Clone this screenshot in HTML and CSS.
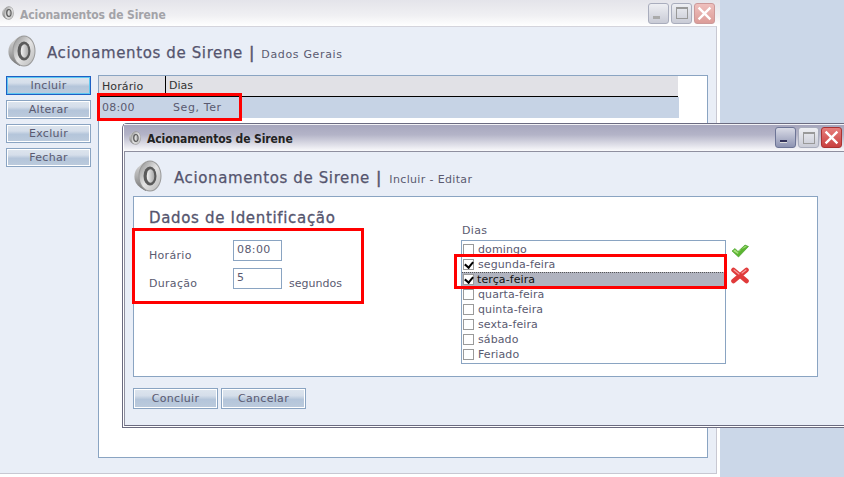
FILE: index.html
```html
<!DOCTYPE html>
<html>

<head>
    <title>Acionamentos de Sirene</title>
    <meta charset="UTF-8" />
    <link rel="stylesheet" href="styles.css">
</head>

<body>
    <svg class="defs" width="0" height="0">
        <defs>
            <linearGradient id="cone" x1="0" x2="0" y1="0" y2="1">
                <stop offset="0" stop-color="#d8d8d8" />
                <stop offset="0.5" stop-color="#b0b0b0" />
                <stop offset="1" stop-color="#707070" />
            </linearGradient>
            <linearGradient id="rim" x1="0" x2="1" y1="0" y2="1">
                <stop offset="0" stop-color="#8f8f8f" />
                <stop offset="0.5" stop-color="#e4e4e4" />
                <stop offset="1" stop-color="#b8b8b8" />
            </linearGradient>
            <linearGradient id="hub" x1="0" x2="1" y1="0" y2="0">
                <stop offset="0" stop-color="#f4f4f4" />
                <stop offset="1" stop-color="#a8a8a8" />
            </linearGradient>
            <symbol id="speaker" viewBox="0 0 28 32">
                <path d="M12 1 C6 5 3 8 1.5 11 C0 14 0 19 1.5 22 C3 25 6 28 12 31 Z" fill="url(#cone)" />
                <ellipse cx="16" cy="16" rx="11.5" ry="15.5" fill="#999" />
                <ellipse cx="16" cy="16" rx="10.5" ry="14.5" fill="url(#rim)" />
                <ellipse cx="16" cy="16" rx="6.5" ry="9.5" fill="#5a5a5a" />
                <ellipse cx="16.5" cy="16" rx="3.8" ry="6.8" fill="url(#hub)" />
            </symbol>
        </defs>
    </svg>

    <div class="window back">
        <div class="titlebar">
            <svg class="title-icon"><use href="#speaker" /></svg>
            <span class="title-text">Acionamentos de Sirene</span>
            <div class="win-buttons">
                <span class="win-btn"><i class="min"></i></span>
                <span class="win-btn"><i class="max"></i></span>
                <span class="win-btn close">
                    <svg width="15" height="15" viewBox="0 0 14 14"><path d="M1.5 1.5 L12.5 12.5 M12.5 1.5 L1.5 12.5" stroke="#fff" stroke-width="2.2" /></svg>
                </span>
            </div>
        </div>
        <div class="client">
            <div class="page-head">
                <svg class="head-icon"><use href="#speaker" /></svg>
                <span class="head-title">Acionamentos de Sirene</span>
                <span class="head-sep">|</span>
                <span class="head-sub">Dados Gerais</span>
            </div>
            <div class="main">
                <div class="side">
                    <button class="btn focus">Incluir</button>
                    <button class="btn">Alterar</button>
                    <button class="btn">Excluir</button>
                    <button class="btn">Fechar</button>
                </div>
                <div class="grid">
                    <div class="grid-head">
                        <span class="col-time">Horário</span>
                        <span class="col-days">Dias</span>
                    </div>
                    <div class="grid-row">
                        <span class="cell-time">08:00</span>
                        <span class="cell-days">Seg, Ter</span>
                    </div>
                </div>
            </div>
        </div>
    </div>

    <div class="window front">
        <div class="titlebar">
            <svg class="title-icon"><use href="#speaker" /></svg>
            <span class="title-text">Acionamentos de Sirene</span>
            <div class="win-buttons">
                <span class="win-btn hot"><i class="min"></i></span>
                <span class="win-btn"><i class="max"></i></span>
                <span class="win-btn close">
                    <svg width="15" height="15" viewBox="0 0 14 14"><path d="M1.5 1.5 L12.5 12.5 M12.5 1.5 L1.5 12.5" stroke="#fff" stroke-width="2.2" /></svg>
                </span>
            </div>
        </div>
        <div class="client">
            <div class="page-head">
                <svg class="head-icon"><use href="#speaker" /></svg>
                <span class="head-title">Acionamentos de Sirene</span>
                <span class="head-sep">|</span>
                <span class="head-sub">Incluir - Editar</span>
            </div>
            <div class="panel">
                <div class="panel-left">
                    <h2>Dados de Identificação</h2>
                    <div class="field">
                        <label>Horário</label>
                        <input type="text" value="08:00" />
                    </div>
                    <div class="field">
                        <label>Duração</label>
                        <input type="text" value="5" />
                        <span class="unit">segundos</span>
                    </div>
                </div>
                <div class="panel-right">
                    <div class="list-label">Dias</div>
                    <div class="list-wrap">
                        <div class="list">
                            <div class="item"><span class="box"></span>domingo</div>
                            <div class="item"><span class="box on"></span>segunda-feira</div>
                            <div class="item selected"><span class="box on"></span><span class="item-text">terça-feira</span></div>
                            <div class="item"><span class="box"></span>quarta-feira</div>
                            <div class="item"><span class="box"></span>quinta-feira</div>
                            <div class="item"><span class="box"></span>sexta-feira</div>
                            <div class="item"><span class="box"></span>sábado</div>
                            <div class="item"><span class="box"></span>Feriado</div>
                        </div>
                        <div class="list-actions">
                            <svg width="18" height="14" viewBox="0 0 18 14">
                                <path d="M1 7 L4 4.5 L7 7.5 L14 1 L17.5 2.5 L7.5 13 Z" fill="#5cb531" stroke="#3d9a22" stroke-width="0.6" />
                                <path d="M2 7 L4 5.5 L7 8.5 L14 2 L16 2.6 L8 6.5 L7 10 Z" fill="#a6e07d" />
                            </svg>
                            <svg width="18" height="17" viewBox="0 0 18 17">
                                <path d="M2.5 3 L15.5 14 M15.5 3 L2.5 14" stroke="#e03a3a" stroke-width="4.6" stroke-linecap="round" />
                                <path d="M3 3 L8 7 M15 3 L11 6" stroke="#f79a9a" stroke-width="1.2" stroke-linecap="round" />
                            </svg>
                        </div>
                    </div>
                </div>
            </div>
            <div class="actions">
                <button class="btn wide">Concluir</button>
                <button class="btn wide">Cancelar</button>
            </div>
        </div>
    </div>

    <div class="mark mark-row"></div>
    <div class="mark mark-fields"></div>
    <div class="mark mark-days"></div>
</body>

</html>
```

FILE: styles.css
```css
body {
    margin: 0;
    width: 844px;
    height: 477px;
    overflow: hidden;
    position: relative;
    background-color: #cbd7e8;
    font-family: "DejaVu Sans", Verdana, sans-serif;
    font-size: 11px;
    color: #5a5a70;
}

.defs {
    position: absolute;
}

.window {
    position: absolute;
    box-sizing: border-box;
    display: flex;
    flex-direction: column;
    background-color: #fff;
}

.back {
    left: 0;
    top: 0;
    width: 720px;
    height: 477px;
    padding: 0 3px 3px 0;
    border-top-right-radius: 5px;
}

.front {
    left: 122px;
    top: 123px;
    width: 722px;
    height: 305px;
    border: 1px solid #6b6b80;
    border-right: none;
    border-radius: 5px 0 0 0;
}

.titlebar {
    flex: none;
    display: flex;
    align-items: center;
    height: 26px;
    margin-right: -3px;
    background: linear-gradient(#e4e4ea, #f0f0f3 60%, #fff);
    color: #a3a3a8;
    font-family: "DejaVu Sans Condensed", "DejaVu Sans", sans-serif;
    font-weight: bold;
    font-size: 12px;
    letter-spacing: -0.1px;
}

.front .titlebar {
    height: 28px;
    margin: 0 0 0 1px;
    background: linear-gradient(#a5a5bc, #b4b4c8 40%, #fafafc);
    box-shadow: inset 0 1px 0 #f2f2f6;
    color: #222;
    border-bottom: 1px solid #8f8f9f;
    box-sizing: border-box;
}

.title-icon {
    width: 12px;
    height: 14px;
    margin: 0 6px 0 2px;
    flex: none;
}

.front .title-icon {
    margin: 0 6px 0 5px;
}

.title-text {
    margin-top: 3px;
}

.win-buttons {
    margin-left: auto;
    display: flex;
    gap: 2px;
    margin-right: 5px;
}

.front .win-buttons {
    margin-right: 2px;
}

.win-btn {
    box-sizing: border-box;
    width: 21px;
    height: 21px;
    border: 1px solid #a9adbd;
    border-radius: 3px;
    background: linear-gradient(#eeeff3, #c9cbd6);
    display: flex;
    align-items: center;
    justify-content: center;
    position: relative;
}

.win-btn.hot {
    border-color: #6d7596;
    background: linear-gradient(#d9dbe6, #8d93b2);
}

.win-btn.close {
    border-color: #c99;
    background: linear-gradient(#efc0bd, #dc9c98);
}

.front .win-btn.close {
    border-color: #a33;
    background: linear-gradient(#e67e7c, #c9403f);
}

.min {
    position: absolute;
    left: 4px;
    bottom: 4px;
    width: 7px;
    height: 3px;
    box-sizing: border-box;
    background-color: #aaa;
}

.hot .min {
    background-color: #33335a;
    border-top: 1px solid #33335a;
    border-bottom: 1px solid #ddd;
}

.max {
    box-sizing: border-box;
    width: 12px;
    height: 12px;
    border: 1px solid #999;
    border-top-width: 2px;
}

.client {
    flex: 1;
    box-sizing: border-box;
    min-height: 0;
    display: flex;
    flex-direction: column;
    background-color: #e9eef7;
    border-top: 1px solid #d4d4dc;
    border-right: 1px solid #c8c8d2;
    border-bottom: 1px solid #c8c8d2;
}

.front .client {
    margin: 0 0 1px 1px;
    border: none;
    border-left: 1px solid #8f8f9f;
    border-bottom: 1px solid #6b6b80;
}

.page-head {
    flex: none;
    display: flex;
    align-items: center;
    box-sizing: border-box;
    height: 48px;
    padding-left: 8px;
}

.front .page-head {
    padding: 4px 0 0 9px;
    height: 44px;
}

.head-icon {
    width: 28px;
    height: 32px;
    margin-right: 11px;
}

.front .head-icon {
    margin-right: 12px;
}

.head-title {
    margin-top: 4px;
    font-size: 15px;
    letter-spacing: 0.62px;
    color: #55556e;
    -webkit-text-stroke: 0.25px #55556e;
}

.head-sep {
    margin: 3px 7px 0 6px;
    font-size: 16px;
    color: #55556e;
    -webkit-text-stroke: 0.5px #55556e;
}

.head-sub {
    margin-top: 7px;
    font-size: 11px;
    letter-spacing: 0.65px;
}

.front .head-sub {
    margin-left: 1px;
    letter-spacing: 0.35px;
}

.main {
    flex: 1;
    min-height: 0;
    display: flex;
    padding-left: 6px;
    gap: 7px;
}

.side {
    width: 85px;
    display: flex;
    flex-direction: column;
    gap: 5px;
    padding-top: 1px;
}

.btn {
    box-sizing: border-box;
    width: 85px;
    height: 19px;
    padding: 0;
    border: 1px solid #8aa4c2;
    box-shadow: inset 0 0 0 1px #fff;
    background: linear-gradient(#dde5ee, #d5deea 35%, #b4c5da 55%, #bccbdd);
    font-family: "DejaVu Sans", Verdana, sans-serif;
    font-size: 11px;
    letter-spacing: 0.3px;
    color: #5a5a70;
}

.btn.focus {
    border-color: #1f5fc4;
    box-shadow: inset 0 0 0 1px #5fc8f0;
}

.grid {
    width: 610px;
    height: 383px;
    box-sizing: border-box;
    border: 1px solid #8aa4c2;
    background-color: #fff;
}

.grid-head {
    display: flex;
    align-items: center;
    width: 579px;
    height: 21px;
    box-sizing: border-box;
    background-color: #e1e1e6;
    border-bottom: 1px solid #000;
    color: #333;
}

.col-time {
    box-sizing: border-box;
    width: 67px;
    height: 20px;
    padding-left: 3px;
    line-height: 22px;
    letter-spacing: 0.1px;
    border-right: 1px solid #000;
}

.col-days {
    padding-left: 3px;
    line-height: 22px;
}

.grid-row {
    display: flex;
    align-items: center;
    width: 580px;
    height: 21px;
    background-color: #c6d3e5;
}

.cell-time {
    width: 71px;
    padding-left: 3px;
    letter-spacing: 0.2px;
}

.cell-days {
    letter-spacing: 0.6px;
}

.panel {
    box-sizing: border-box;
    margin-left: 8px;
    width: 685px;
    height: 181px;
    flex: none;
    display: flex;
    border: 1px solid #8aa4c2;
    background-color: #fff;
}

.panel-left {
    width: 312px;
    padding-left: 15px;
}

h2 {
    margin: 12px 0 13px;
    font-size: 15px;
    font-weight: normal;
    letter-spacing: 0.67px;
    color: #55556e;
    line-height: 18px;
    -webkit-text-stroke: 0.3px #55556e;
}

.field {
    display: flex;
    align-items: center;
    height: 21px;
    margin-bottom: 7px;
}

.field label {
    width: 84px;
    margin-top: 9px;
    letter-spacing: 0.3px;
}

input {
    box-sizing: border-box;
    width: 49px;
    height: 21px;
    padding: 0 0 3px 3px;
    border: 1px solid #8aa4c2;
    background-color: #fff;
    font-family: "DejaVu Sans", Verdana, sans-serif;
    font-size: 11px;
    letter-spacing: 0.4px;
    color: #5a5a70;
    outline: none;
}

.unit {
    margin: 9px 0 0 7px;
}

.panel-right {
    padding-top: 27px;
}

.list-label {
    line-height: 14px;
    padding-left: 1px;
    margin-bottom: 2px;
    letter-spacing: 0.3px;
}

.list-wrap {
    display: flex;
}

.list {
    box-sizing: border-box;
    width: 265px;
    height: 124px;
    border: 1px solid #8aa4c2;
    background-color: #fff;
    padding-top: 1px;
}

.item {
    display: flex;
    align-items: center;
    height: 15px;
    letter-spacing: 0.1px;
}

.item.selected {
    box-sizing: border-box;
    padding-bottom: 1px;
    background-color: #b0b3bf;
    color: #111;
    border-top: 1px dotted #555;
}

.item-text {
    margin-left: -1px;
}

.box {
    box-sizing: border-box;
    width: 11px;
    height: 11px;
    margin: 0 4px 0 1px;
    border: 1px solid #9a9a9a;
    background-color: #fff;
    position: relative;
    flex: none;
}

.box.on::after {
    content: "";
    position: absolute;
    left: 2px;
    top: 0;
    width: 4px;
    height: 6px;
    border: solid #000;
    border-width: 0 2px 2px 0;
    transform: rotate(40deg);
}

.list-actions {
    display: flex;
    flex-direction: column;
    gap: 9px;
    margin: 4px 0 0 5px;
}

.actions {
    display: flex;
    gap: 3px;
    margin: 11px 0 0 8px;
}

.btn.wide {
    height: 21px;
    letter-spacing: 0.3px;
}

/* red highlights drawn over the screenshot */
.mark {
    position: absolute;
    box-sizing: border-box;
    border: 3px solid #f00;
}

.mark-row {
    left: 97px;
    top: 93px;
    width: 145px;
    height: 28px;
}

.mark-fields {
    left: 132px;
    top: 228px;
    width: 232px;
    height: 76px;
}

.mark-days {
    left: 454px;
    top: 254px;
    width: 273px;
    height: 35px;
}
```
